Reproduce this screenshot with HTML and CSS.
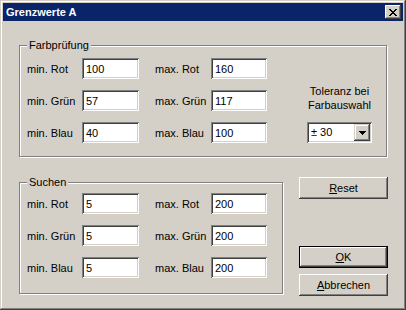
FILE: index.html
```html
<!DOCTYPE html>
<html lang="de">
<head>
    <meta charset="UTF-8">
    <title>Grenzwerte A</title>
    <link rel="stylesheet" href="styles.css">
</head>
<body>
    <div class="window">
        <div class="titlebar">
            <span class="title">Grenzwerte A</span>
            <span class="close">
                <svg width="8" height="7" viewBox="0 0 8 7" shape-rendering="crispEdges">
                    <path d="M0 0h2v1h-2z M6 0h2v1h-2z M1 1h2v1h-2z M5 1h2v1h-2z M2 2h4v1h-4z M3 3h2v1h-2z M2 4h4v1h-4z M1 5h2v1h-2z M5 5h2v1h-2z M0 6h2v1h-2z M6 6h2v1h-2z" fill="#000"/>
                </svg>
            </span>
        </div>

        <div class="content">
            <fieldset class="group group-check">
                <legend>Farbprüfung</legend>
                <div class="group-inner">
                    <div class="fields">
                        <label class="lbl">min. Rot</label><input class="edit" type="text" value="100">
                        <label class="lbl max">max. Rot</label><input class="edit" type="text" value="160">
                        <label class="lbl">min. Grün</label><input class="edit" type="text" value="57">
                        <label class="lbl max">max. Grün</label><input class="edit" type="text" value="117">
                        <label class="lbl">min. Blau</label><input class="edit" type="text" value="40">
                        <label class="lbl max">max. Blau</label><input class="edit" type="text" value="100">
                    </div>
                    <div class="tolerance">
                        <div class="tol-text">Toleranz bei<br>Farbauswahl</div>
                        <div class="combo">
                            <span class="combo-value">± 30</span>
                            <span class="combo-btn">
                                <svg width="7" height="4" viewBox="0 0 7 4" shape-rendering="crispEdges">
                                    <path d="M0 0h7v1h-7z M1 1h5v1h-5z M2 2h3v1h-3z M3 3h1v1h-1z" fill="#000"/>
                                </svg>
                            </span>
                        </div>
                    </div>
                </div>
            </fieldset>

            <div class="lower">
                <fieldset class="group group-search">
                    <legend>Suchen</legend>
                    <div class="fields">
                        <label class="lbl">min. Rot</label><input class="edit" type="text" value="5">
                        <label class="lbl max">max. Rot</label><input class="edit" type="text" value="200">
                        <label class="lbl">min. Grün</label><input class="edit" type="text" value="5">
                        <label class="lbl max">max. Grün</label><input class="edit" type="text" value="200">
                        <label class="lbl">min. Blau</label><input class="edit" type="text" value="5">
                        <label class="lbl max">max. Blau</label><input class="edit" type="text" value="200">
                    </div>
                </fieldset>

                <div class="buttons">
                    <button class="btn btn-reset"><u>R</u>eset</button>
                    <button class="btn btn-ok default"><u>O</u>K</button>
                    <button class="btn btn-cancel"><u>A</u>bbrechen</button>
                </div>
            </div>
        </div>
    </div>
</body>
</html>
```

FILE: styles.css
```css
* {
    box-sizing: border-box;
}
body {
    margin: 0;
    font-family: "Liberation Sans", Arial, sans-serif;
    font-size: 11px;
    color: #000;
}
.window {
    width: 406px;
    height: 310px;
    padding: 3px;
    background: #d4d0c8;
    box-shadow: inset -1px -1px #404040, inset 1px 1px #d4d0c8, inset -2px -2px #808080, inset 2px 2px #fff;
}
.titlebar {
    height: 18px;
    padding: 0 2px 0 3px;
    display: flex;
    align-items: center;
    justify-content: space-between;
    background: #0a246a;
    color: #fff;
    font-weight: bold;
}
.close {
    width: 16px;
    height: 14px;
    display: flex;
    align-items: center;
    justify-content: center;
    background: #d4d0c8;
    box-shadow: inset -1px -1px #404040, inset 1px 1px #fff, inset -2px -2px #808080;
}

.content {
    padding: 18px 0 0 16px;
}
.group {
    margin: 0;
    border: 1px solid #808080;
    box-shadow: inset 1px 1px #fff, 1px 1px #fff;
}
.group legend {
    padding: 0 2px;
    line-height: 13px;
    background: #d4d0c8;
}
.group-check {
    width: 368px;
    padding: 6px 0 13px 7px;
}
.group-search {
    width: 264px;
    padding: 4px 0 15px 7px;
}
.group-inner {
    display: flex;
}

.fields {
    display: grid;
    grid-template-columns: 55px 57px 72px 56px;
    grid-auto-rows: 21px;
    row-gap: 11px;
    align-items: center;
}
.lbl.max {
    padding-left: 16px;
}
.edit {
    width: 100%;
    height: 21px;
    padding: 0 0 0 4px;
    border: none;
    outline: none;
    background: #fff;
    font: inherit;
    color: #000;
    box-shadow: inset 1px 1px #808080, inset -1px -1px #fff, inset 2px 2px #404040, inset -2px -2px #d4d0c8;
}

.tolerance {
    width: 65px;
    margin-left: 40px;
    display: flex;
    flex-direction: column;
    justify-content: flex-end;
    text-align: center;
}
.tol-text {
    line-height: 14px;
    margin-bottom: 10px;
}
.combo {
    height: 21px;
    padding: 2px;
    display: flex;
    background: #fff;
    box-shadow: inset 1px 1px #808080, inset -1px -1px #fff, inset 2px 2px #404040, inset -2px -2px #d4d0c8;
}
.combo-value {
    flex: 1;
    padding-left: 2px;
    line-height: 17px;
    text-align: left;
}
.combo-btn {
    width: 16px;
    display: flex;
    align-items: center;
    justify-content: center;
    background: #d4d0c8;
    box-shadow: inset -1px -1px #404040, inset 1px 1px #d4d0c8, inset -2px -2px #808080, inset 2px 2px #fff;
}

.lower {
    margin-top: 19px;
    display: flex;
    align-items: flex-start;
}
.buttons {
    width: 89px;
    margin-left: 16px;
    margin-top: 1px;
    display: flex;
    flex-direction: column;
}
.btn {
    width: 89px;
    height: 22px;
    padding: 0;
    border: none;
    background: #d4d0c8;
    font: inherit;
    color: #000;
    box-shadow: inset -1px -1px #404040, inset 1px 1px #fff, inset -2px -2px #808080, inset 2px 2px #d4d0c8;
}
.btn.default {
    box-shadow: inset 0 0 0 1px #000, inset -2px -2px #404040, inset 2px 2px #fff, inset -3px -3px #808080;
}
.btn-ok {
    margin-top: 47px;
}
.btn-cancel {
    margin-top: 6px;
}
```
